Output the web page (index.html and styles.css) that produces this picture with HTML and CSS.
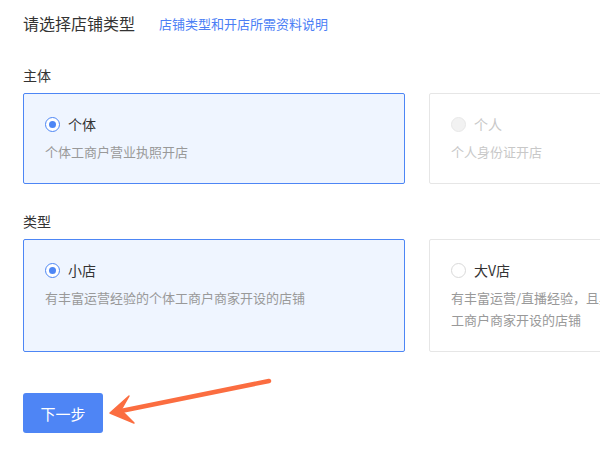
FILE: index.html
```html
<!DOCTYPE html>
<html lang="zh-CN">
<head>
<meta charset="utf-8">
<title>请选择店铺类型</title>
<link rel="stylesheet" href="styles.css">
</head>
<body>
<div class="page">
  <div class="head">
    <span class="title">请选择店铺类型</span>
    <a class="help" href="#">店铺类型和开店所需资料说明</a>
  </div>

  <div class="section">
    <div class="label">主体</div>
    <div class="cards">
      <div class="card active">
        <div class="opt"><span class="radio checked"></span><span class="name">个体</span></div>
        <div class="desc">个体工商户营业执照开店</div>
      </div>
      <div class="card disabled">
        <div class="opt"><span class="radio off"></span><span class="name">个人</span></div>
        <div class="desc">个人身份证开店</div>
      </div>
    </div>
  </div>

  <div class="section">
    <div class="label">类型</div>
    <div class="cards">
      <div class="card active">
        <div class="opt"><span class="radio checked"></span><span class="name">小店</span></div>
        <div class="desc">有丰富运营经验的个体工商户商家开设的店铺</div>
      </div>
      <div class="card">
        <div class="opt"><span class="radio"></span><span class="name">大V店</span></div>
        <div class="desc">有丰富运营/直播经验，且具备一定粉丝量及影响力的个体工商户商家开设的店铺</div>
      </div>
    </div>
  </div>

  <button class="next" type="button">下一步</button>
</div>

<svg class="arrow" width="600" height="450" viewBox="0 0 600 450">
  <line x1="269" y1="381" x2="116" y2="412" stroke="#fb6d40" stroke-width="4.5" stroke-linecap="round"/>
  <path d="M110 413 L129 396 L121 410 L134 423 Z" fill="#fb6d40" stroke="#fb6d40" stroke-width="1.5" stroke-linejoin="round"/>
</svg>
</body>
</html>
```
FILE: styles.css
```css
html, body {
  margin: 0;
  padding: 0;
  width: 600px;
  height: 450px;
  overflow: hidden;
  background: #fff;
  font-family: "Noto Sans CJK SC", "Noto Sans", sans-serif;
  color: #333;
}

.page {
  padding: 11px 0 0 23px;
}

.head {
  display: flex;
  align-items: center;
  height: 24px;
  gap: 24px;
}

.title {
  font-size: 16px;
  line-height: 24px;
  color: #333;
}

.help {
  font-size: 13px;
  color: #4b7ef5;
  text-decoration: none;
}

.section {
  margin-top: 29px;
}

.section + .section {
  margin-top: 26px;
}

.label {
  font-size: 14px;
  line-height: 22px;
  margin-bottom: 7px;
  color: #333;
}

.cards {
  display: flex;
  gap: 24px;
  align-items: stretch;
}

.card {
  flex: 0 0 382px;
  box-sizing: border-box;
  border: 1px solid #e6e6e6;
  border-radius: 2px;
  background: #fff;
  padding: 20px 21px;
}

.card.active {
  border-color: #4d86f5;
  background: #eff5ff;
}

.opt {
  display: flex;
  align-items: center;
  height: 20px;
  gap: 8px;
}

.name {
  font-size: 14px;
  line-height: 20px;
  color: #333;
}

.radio {
  box-sizing: border-box;
  width: 15px;
  height: 15px;
  border-radius: 50%;
  border: 1px solid #d9d9d9;
  background: #fff;
  position: relative;
  flex: none;
}

.radio.checked {
  border-color: #4d86f5;
}

.radio.checked::after {
  content: "";
  position: absolute;
  left: 3px;
  top: 3px;
  width: 7px;
  height: 7px;
  border-radius: 50%;
  background: #4d86f5;
}

.radio.off {
  background: #f2f2f2;
  border-color: #e8e8e8;
}

.desc {
  margin-top: 7px;
  font-size: 13px;
  line-height: 22px;
  color: #999;
}

.disabled .name,
.disabled .desc {
  color: #c8c8c8;
}

.next {
  margin-top: 41px;
  width: 80px;
  height: 40px;
  border: none;
  border-radius: 3px;
  background: #4e85f5;
  color: #fff;
  font-family: "Noto Sans CJK SC", "Noto Sans", sans-serif;
  font-size: 15px;
  padding: 0;
  cursor: pointer;
}

.arrow {
  position: absolute;
  left: 0;
  top: 0;
  pointer-events: none;
}
```
